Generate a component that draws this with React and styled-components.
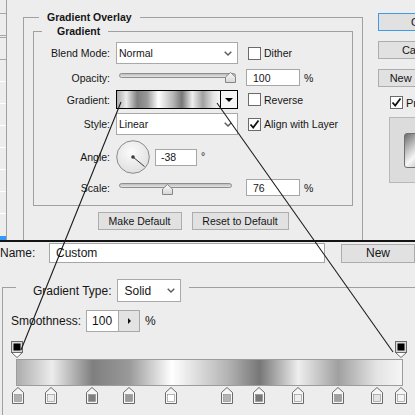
import React from "react";
import styled, { createGlobalStyle } from "styled-components";

const GlobalStyle = createGlobalStyle`
  * { box-sizing: border-box; }
  html, body { margin: 0; padding: 0; background: #ededed; overflow: hidden; }
`;

// gradient stops, loc = px from the left edge of the big bar (386px wide)
const stops = [
  { loc: 2, color: "#b0b0b0" },
  { loc: 35, color: "#ececec" },
  { loc: 76, color: "#7f7f7f" },
  { loc: 113, color: "#9a9a9a" },
  { loc: 155, color: "#ffffff" },
  { loc: 211, color: "#b4b4b4" },
  { loc: 243, color: "#777777" },
  { loc: 282, color: "#eeeeee" },
  { loc: 322, color: "#a0a0a0" },
  { loc: 361, color: "#e4e4e4" },
  { loc: 385, color: "#f4f4f4" },
];

const GRADIENT = `linear-gradient(to right, ${stops
  .map((s) => `${s.color} ${((s.loc / 386) * 100).toFixed(1)}%`)
  .join(", ")})`;

const stripRows = [
  { h: 22, c: "#a6a6a6" },
  { h: 2, c: "#a6a6a6" },
  { h: 22, c: "#a6a6a6" },
  { h: 22, c: "#a6a6a6" },
  { h: 22, c: "#ffffff" },
  { h: 22, c: "#ffffff" },
  { h: 22, c: "#ffffff" },
  { h: 22, c: "#ffffff" },
  { h: 22, c: "#ffffff" },
  { h: 22, c: "#ffffff" },
  { h: 22, c: "#ffffff" },
];

const Page = styled.div`
  position: relative;
  width: 415px;
  height: 415px;
  overflow: hidden;
  background: #ededed;
  font-family: "Liberation Sans", Arial, sans-serif;
  color: #151515;
`;

const TopSection = styled.div`
  display: flex;
  height: 242px;
  border-bottom: 2px solid #141414;
  font-size: 10.5px;
`;

const LeftStrip = styled.div`
  width: 7px;
  flex-shrink: 0;
  border-right: 1px solid #a0a0a0;
  padding-top: 13px;
  display: flex;
  flex-direction: column;
`;

const StripRow = styled.div`
  height: ${(p) => p.$h}px;
  border-top: 1px solid ${(p) => p.$c};
`;

const StripSelected = styled.div`
  margin-top: auto;
  height: 4px;
  background: #3399ff;
`;

const OuterGroup = styled.div`
  margin: 17px 0 0 16px;
  width: 340px;
  flex-shrink: 0;
  border: 1px solid #a0a0a0;
  border-bottom: none;
`;

const GroupTitle = styled.div`
  width: fit-content;
  margin: -7px 0 0 ${(p) => p.$ml}px;
  padding: 0 8px 0 ${(p) => p.$pl}px;
  background: #ededed;
  font-weight: bold;
  line-height: 13px;
  height: 13px;
`;

const InnerGroup = styled.div`
  margin: 7px 9px 0 9px;
  border: 1px solid #a0a0a0;
  padding-bottom: 9px;
`;

const Row = styled.div`
  display: flex;
  align-items: center;
  height: ${(p) => p.$h}px;
  margin-top: ${(p) => p.$mt}px;
`;

const Label = styled.div`
  width: 76px;
  margin-right: 6px;
  text-align: right;
  white-space: nowrap;
`;

const Select = styled.div`
  width: ${(p) => p.$w}px;
  height: ${(p) => p.$h}px;
  border: 1px solid #a9a9a9;
  background: #fff;
  display: flex;
  align-items: center;
  justify-content: space-between;
  padding: 0 5px 0 ${(p) => p.$pl}px;
  flex-shrink: 0;
`;

const Chevron = () => (
  <svg width="8" height="5" viewBox="0 0 8 5">
    <path d="M0.7 0.7 L4 4 L7.3 0.7" fill="none" stroke="#5a5a5a" strokeWidth="1.4" />
  </svg>
);

const CheckItem = styled.div`
  display: flex;
  align-items: center;
  margin-left: ${(p) => p.$ml}px;
  white-space: nowrap;
`;

const Box = styled.span`
  width: 13px;
  height: 13px;
  border: 1px solid #6b6b6b;
  background: #fff;
  margin-right: 3px;
  display: flex;
  align-items: center;
  justify-content: center;
  flex-shrink: 0;
`;

const Checkbox = ({ checked, children, ml = 10 }) => (
  <CheckItem $ml={ml}>
    <Box>
      {checked && (
        <svg width="11" height="11" viewBox="0 0 11 11">
          <path d="M1.5 5.5 L4.2 8.5 L9.5 1.5" fill="none" stroke="#111" strokeWidth="1.8" />
        </svg>
      )}
    </Box>
    {children}
  </CheckItem>
);

const Slider = styled.div`
  position: relative;
  width: 122px;
  height: 17px;
  flex-shrink: 0;
`;

const Track = styled.div`
  margin: ${(p) => p.$mt}px 0 0 3px;
  width: ${(p) => p.$w}px;
  height: 5px;
  border: 1px solid #8e8e8e;
  border-radius: 3px;
  background: linear-gradient(#bdbdbd, #e4e4e4);
`;

const Thumb = styled.svg`
  position: absolute;
  top: ${(p) => p.$top}px;
`;

const SliderThumb = ({ left, top }) => (
  <Thumb $top={top} width="11" height="11" viewBox="0 0 11 11" style={{ left }}>
    <defs>
      <linearGradient id="tg" x1="0" y1="0" x2="0" y2="1">
        <stop offset="0" stopColor="#fafafa" />
        <stop offset="1" stopColor="#d6d6d6" />
      </linearGradient>
    </defs>
    <polygon points="5.5,0.5 10.5,5 10.5,10.5 0.5,10.5 0.5,5" fill="url(#tg)" stroke="#858585" />
  </Thumb>
);

const Field = styled.div`
  width: ${(p) => p.$w}px;
  height: ${(p) => p.$h}px;
  margin-left: ${(p) => p.$ml}px;
  border: 1px solid #a6a6a6;
  background: #fff;
  display: flex;
  align-items: center;
  padding-left: ${(p) => p.$pl}px;
  flex-shrink: 0;
`;

const Unit = styled.span`
  margin-left: ${(p) => p.$ml}px;
  align-self: ${(p) => (p.$top ? "flex-start" : "center")};
  margin-top: ${(p) => (p.$top ? 10 : 0)}px;
`;

const Swatch = styled.div`
  width: 122px;
  height: 19px;
  border: 1px solid #000;
  display: flex;
  flex-shrink: 0;
`;

const SwatchFill = styled.div`
  flex: 1;
  background: ${GRADIENT};
`;

const SwatchArrow = styled.div`
  width: 17px;
  border-left: 1px solid #000;
  background: #f4f4f4;
  display: flex;
  align-items: center;
  justify-content: center;
  &::after {
    content: "";
    border-left: 4px solid transparent;
    border-right: 4px solid transparent;
    border-top: 4px solid #000;
  }
`;

const ButtonRow = styled.div`
  display: flex;
  justify-content: center;
  gap: 10px;
  margin-top: 6px;
`;

const Button = styled.div`
  width: ${(p) => p.$w}px;
  height: ${(p) => p.$h || 18}px;
  border: 1px solid ${(p) => (p.$focus ? "#3d9be9" : "#adadad")};
  background: #e1e1e1;
  display: flex;
  align-items: center;
  justify-content: center;
  white-space: nowrap;
  flex-shrink: 0;
`;

const RightColumn = styled.div`
  margin-left: 15px;
  padding-top: 13px;
  display: flex;
  flex-direction: column;
  gap: 10px;
  font-size: 11px;
`;

const PreviewCheck = styled.div`
  margin: -1px 0 0 12px;
  display: flex;
  align-items: center;
`;

const PreviewBox = styled.div`
  margin: -2px 0 0 11px;
  width: 60px;
  height: 66px;
  border: 1px solid #b8b8b8;
  background: #dcdcdc;
  padding: 15px 0 0 14px;
`;

const PreviewSwatch = styled.div`
  width: 40px;
  height: 35px;
  border: 1px solid #6f6f6f;
  border-radius: 3px;
  background: linear-gradient(135deg, #6c6c6c 0%, #bdbdbd 25%, #f7f7f7 45%, #c9c9c9 65%, #8d8d8d 100%);
`;

/* bottom: gradient editor */

const BottomSection = styled.div`
  font-size: 12px;
`;

const NameRow = styled.div`
  display: flex;
  align-items: center;
  margin-top: 1px;
`;

const NameLabel = styled.div`
  width: 51px;
`;

const EditorGroup = styled.div`
  margin: 24px 0 0 2px;
  width: 440px;
  height: 200px;
  border-top: 1px solid #a0a0a0;
  border-left: 1px solid #a0a0a0;
`;

const TypeTitle = styled.div`
  display: flex;
  align-items: center;
  width: fit-content;
  height: 23px;
  margin: -9px 0 0 13px;
  padding: 0 8px 0 17px;
  background: #ededed;
`;

const SmoothRow = styled.div`
  display: flex;
  align-items: center;
  height: 22px;
  margin-top: 8px;
  padding-left: 8px;
`;

const Stepper = styled.div`
  display: flex;
  height: 22px;
  margin-left: 5px;
  border: 1px solid #a8a8a8;
`;

const StepValue = styled.div`
  width: 31px;
  background: #fff;
  padding-left: 5px;
  display: flex;
  align-items: center;
`;

const StepButton = styled.div`
  width: 21px;
  border-left: 1px solid #a8a8a8;
  background: #e3e3e3;
  display: flex;
  align-items: center;
  justify-content: center;
  &::after {
    content: "";
    border-top: 3px solid transparent;
    border-bottom: 3px solid transparent;
    border-left: 3px solid #111;
  }
`;

const StopsArea = styled.div`
  margin: 9px 0 0 13px;
  width: 387px;
`;

const StopRow = styled.div`
  position: relative;
  height: 17px;
  margin-top: ${(p) => p.$mt}px;
`;

const StopMark = styled.svg`
  position: absolute;
  top: 0;
`;

const Bar = styled.div`
  margin-top: 1px;
  height: 27px;
  border: 1px solid #9c9c9c;
  background: ${GRADIENT};
`;

const OpacityStop = ({ loc }) => (
  <StopMark width="13" height="17" viewBox="0 0 13 17" style={{ left: loc - 6.5 }}>
    <rect x="0.5" y="0.5" width="11" height="11" fill="#d8d8d8" stroke="#6a6a6a" />
    <rect x="2.5" y="2.5" width="7" height="7" fill="#000" />
    <polygon points="0.5,11.5 11.5,11.5 6,16.5" fill="#fff" stroke="#6a6a6a" />
  </StopMark>
);

const ColorStop = ({ loc, color }) => (
  <StopMark width="13" height="17" viewBox="0 0 13 17" style={{ left: loc - 6 }}>
    <polygon points="6,0.5 11.5,5.5 11.5,16.5 0.5,16.5 0.5,5.5" fill="#f6f6f6" stroke="#6a6a6a" />
    <rect x="2.5" y="7.5" width="7" height="7" fill={color} stroke="#8a8a8a" strokeWidth="0.6" />
  </StopMark>
);

const Dial = () => (
  <svg width="34" height="34" viewBox="0 0 34 34" style={{ flexShrink: 0 }}>
    <defs>
      <radialGradient id="dg" cx="0.45" cy="0.35" r="0.7">
        <stop offset="0" stopColor="#fbfbfb" />
        <stop offset="1" stopColor="#dedede" />
      </radialGradient>
    </defs>
    <circle cx="17" cy="17" r="16.3" fill="url(#dg)" stroke="#8a8a8a" />
    <line x1="17" y1="17" x2="28.5" y2="26.5" stroke="#3a3a3a" strokeWidth="1" />
    <circle cx="17" cy="17" r="1.8" fill="#3a3a3a" />
  </svg>
);

// the two callout lines drawn over the screenshots
const Callouts = styled.svg`
  position: absolute;
  left: 0;
  top: 0;
  pointer-events: none;
`;

export default function App() {
  return (
    <Page>
      <GlobalStyle />
      <TopSection>
        <LeftStrip>
          {stripRows.map((r, i) => (
            <StripRow key={i} $h={r.h} $c={r.c} />
          ))}
          <StripSelected />
        </LeftStrip>

        <OuterGroup>
          <GroupTitle $ml={15} $pl={8}>Gradient Overlay</GroupTitle>
          <InnerGroup>
            <GroupTitle $ml={8} $pl={15}>Gradient</GroupTitle>

            <Row $h={22} $mt={4}>
              <Label>Blend Mode:</Label>
              <Select $w={122} $h={22} $pl={2}>
                Normal
                <Chevron />
              </Select>
              <Checkbox>Dither</Checkbox>
            </Row>

            <Row $h={17} $mt={5}>
              <Label>Opacity:</Label>
              <Slider>
                <Track $w={117} $mt={4} />
                <SliderThumb left={109} top={3} />
              </Slider>
              <Field $w={54} $h={17} $ml={8} $pl={6}>100</Field>
              <Unit $ml={4}>%</Unit>
            </Row>

            <Row $h={19} $mt={4}>
              <Label>Gradient:</Label>
              <Swatch>
                <SwatchFill />
                <SwatchArrow />
              </Swatch>
              <Checkbox>Reverse</Checkbox>
            </Row>

            <Row $h={22} $mt={4}>
              <Label>Style:</Label>
              <Select $w={122} $h={22} $pl={2}>
                Linear
                <Chevron />
              </Select>
              <Checkbox checked>Align with Layer</Checkbox>
            </Row>

            <Row $h={34} $mt={5}>
              <Label>Angle:</Label>
              <Dial />
              <Field $w={42} $h={17} $ml={5} $pl={5}>-38</Field>
              <Unit $ml={4} $top>°</Unit>
            </Row>

            <Row $h={17} $mt={5}>
              <Label>Scale:</Label>
              <Slider>
                <Track $w={113} $mt={4} />
                <SliderThumb left={46} top={5} />
              </Slider>
              <Field $w={54} $h={17} $ml={8} $pl={6}>76</Field>
              <Unit $ml={4}>%</Unit>
            </Row>
          </InnerGroup>

          <ButtonRow>
            <Button $w={84}>Make Default</Button>
            <Button $w={97}>Reset to Default</Button>
          </ButtonRow>
        </OuterGroup>

        <RightColumn>
          <Button $w={82} $focus>OK</Button>
          <Button $w={82}>Cancel</Button>
          <Button $w={82}>New Style...</Button>
          <PreviewCheck>
            <Checkbox checked ml={0}>Preview</Checkbox>
          </PreviewCheck>
          <PreviewBox>
            <PreviewSwatch />
          </PreviewBox>
        </RightColumn>
      </TopSection>

      <BottomSection>
        <NameRow>
          <NameLabel>Name:</NameLabel>
          <Field $w={276} $h={20} $ml={0} $pl={6}>Custom</Field>
          <Button $w={74} $h={19} style={{ marginLeft: 16 }}>New</Button>
        </NameRow>

        <EditorGroup>
          <TypeTitle>
            Gradient Type:
            <Select $w={64} $h={23} $pl={7} style={{ marginLeft: 5 }}>
              Solid
              <Chevron />
            </Select>
          </TypeTitle>

          <SmoothRow>
            Smoothness:
            <Stepper>
              <StepValue>100</StepValue>
              <StepButton />
            </Stepper>
            <Unit $ml={5}>%</Unit>
          </SmoothRow>

          <StopsArea>
            <StopRow $mt={0}>
              <OpacityStop loc={1.5} />
              <OpacityStop loc={385.5} />
            </StopRow>
            <Bar />
            <StopRow $mt={1}>
              {stops.map((s) => (
                <ColorStop key={s.loc} loc={s.loc} color={s.color} />
              ))}
            </StopRow>
          </StopsArea>
        </EditorGroup>
      </BottomSection>

      <Callouts width="415" height="415" viewBox="0 0 415 415">
        <line x1="121" y1="102" x2="21" y2="350" stroke="#1c1c1c" strokeWidth="1.1" />
        <line x1="217" y1="103" x2="393" y2="352" stroke="#1c1c1c" strokeWidth="1.1" />
      </Callouts>
    </Page>
  );
}
